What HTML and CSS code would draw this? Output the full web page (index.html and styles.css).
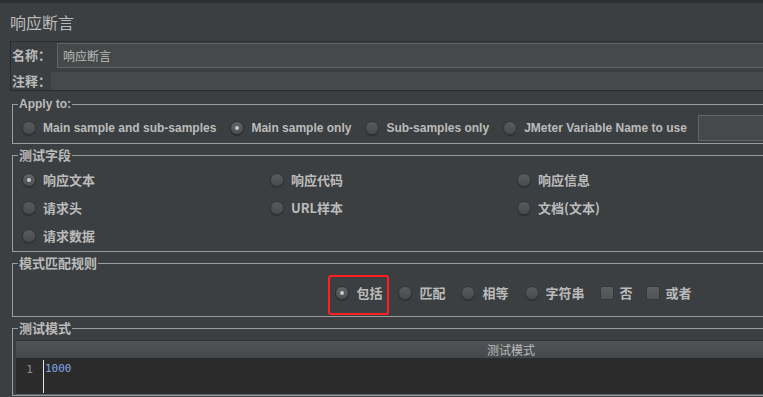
FILE: index.html
```html
<!DOCTYPE html>
<html>
    <head>
        <link rel="stylesheet" href="styles.css">
    </head>
    <body>
        <div class="topbar"></div>
        <div class="title">响应断言</div>
        <div class="name-panel">
            <div class="name-row">
                <span class="label">名称：</span>
                <div class="field name-field">响应断言</div>
            </div>
            <div class="name-row">
                <span class="label">注释：</span>
                <div class="field comment-field"></div>
            </div>
        </div>
        <div class="main">
            <fieldset class="group apply">
                <legend class="latin">Apply to:</legend>
                <div class="apply-row">
                    <span class="option latin"><span class="radio"></span>Main sample and sub-samples</span>
                    <span class="option latin"><span class="radio checked"></span>Main sample only</span>
                    <span class="option latin"><span class="radio"></span>Sub-samples only</span>
                    <span class="option latin"><span class="radio"></span>JMeter Variable Name to use</span>
                    <span class="var-field"></span>
                </div>
            </fieldset>
            <fieldset class="group fields">
                <legend>测试字段</legend>
                <div class="field-grid">
                    <span class="option"><span class="radio checked"></span>响应文本</span>
                    <span class="option"><span class="radio"></span>响应代码</span>
                    <span class="option"><span class="radio"></span>响应信息</span>
                    <span class="option"><span class="radio"></span>请求头</span>
                    <span class="option"><span class="radio"></span>URL样本</span>
                    <span class="option"><span class="radio"></span>文档(文本)</span>
                    <span class="option"><span class="radio"></span>请求数据</span>
                </div>
            </fieldset>
            <fieldset class="group rules">
                <legend>模式匹配规则</legend>
                <div class="rule-row">
                    <span class="option marked"><span class="radio checked"></span>包括</span>
                    <span class="option"><span class="radio"></span>匹配</span>
                    <span class="option"><span class="radio"></span>相等</span>
                    <span class="option"><span class="radio"></span>字符串</span>
                    <span class="option"><span class="checkbox"></span>否</span>
                    <span class="option"><span class="checkbox"></span>或者</span>
                </div>
            </fieldset>
            <fieldset class="group patterns">
                <legend>测试模式</legend>
                <div class="editor">
                    <div class="editor-head">测试模式</div>
                    <div class="editor-body">
                        <div class="gutter">1</div>
                        <div class="code">1000</div>
                    </div>
                </div>
            </fieldset>
        </div>
    </body>
</html>
```

FILE: styles.css
```css
body {
    margin: 0;
    width: 763px;
    height: 397px;
    overflow: hidden;
    background-color: #3c3f41;
    color: #bbbbbb;
    font-family: "Noto Sans CJK SC", "Liberation Sans", sans-serif;
}

.topbar {
    height: 3px;
    background-color: #2d2f30;
}

.title {
    height: 38px;
    line-height: 38px;
    padding-left: 10px;
    font-size: 16px;
}

.name-panel {
    margin-left: 10px;
    width: 1000px;
    border: 1px solid #2b2b2b;
    border-right: none;
}

.name-row {
    display: flex;
    align-items: center;
}

.name-row + .name-row {
    margin-top: 4px;
}

.label {
    width: 39px;
    padding-left: 1px;
    font-size: 13px;
    font-weight: bold;
    line-height: 16px;
}

.field {
    flex: 1;
    background-color: #45494a;
    font-size: 12px;
}

.name-field {
    margin-top: 1px;
    margin-left: 6px;
    height: 23px;
    line-height: 23px;
    padding-left: 5px;
    border: 1px solid #646464;
}

.comment-field {
    height: 18px;
}

.main {
    margin-left: 12px;
    margin-top: 6px;
    width: 998px;
}

.group {
    margin: 0 0 4px 0;
    padding: 0;
    min-width: 0;
    border: 1px solid #9d9d9d;
}

.group legend {
    margin-left: 5px;
    padding: 0 1px;
    font-size: 13px;
    font-weight: bold;
    line-height: 14px;
}

.option {
    display: inline-flex;
    align-items: center;
    font-size: 13px;
    font-weight: bold;
    line-height: 16px;
    white-space: nowrap;
}

.group legend.latin,
.option.latin {
    font-family: "Liberation Sans", sans-serif;
    font-size: 12px;
}

.radio {
    width: 14px;
    height: 14px;
    box-sizing: border-box;
    border-radius: 50%;
    margin-right: 7px;
    background: linear-gradient(#585c5e, #484b4d);
    border: 1px solid #333537;
    box-shadow: 0 1px 0 #2a2c2d;
    display: flex;
    align-items: center;
    justify-content: center;
}

.radio.checked {
    background: linear-gradient(#606466, #4d5052);
    border-color: #2d2f30;
}

.radio.checked::after {
    content: "";
    width: 4px;
    height: 4px;
    border-radius: 50%;
    background-color: #c8c8c8;
}

.checkbox {
    width: 14px;
    height: 14px;
    box-sizing: border-box;
    margin-right: 6px;
    border-radius: 2px;
    background: linear-gradient(#5c5f61, #505355);
    border: 1px solid #353739;
}

.apply-row {
    display: flex;
    align-items: center;
    gap: 14px;
    height: 30px;
    padding: 2px 0 0 9px;
}

.var-field {
    width: 120px;
    height: 26px;
    box-sizing: border-box;
    margin-left: -3px;
    background-color: #45494a;
    border: 1px solid #646464;
}

.field-grid {
    display: grid;
    grid-template-columns: 248px 247px 1fr;
    grid-auto-rows: 28px;
    align-items: center;
    padding: 4px 0 1px 9px;
}

.rule-row {
    display: flex;
    justify-content: center;
    align-items: center;
    gap: 16px;
    height: 42px;
    padding: 2px 0 2px 5px;
}

.rule-row .option:nth-child(5) {
    margin-left: -1px;
}

.rule-row .option:nth-child(6) {
    margin-left: -3px;
}

.marked {
    position: relative;
}

.marked::after {
    content: "";
    position: absolute;
    left: -7px;
    right: -7px;
    top: -10px;
    bottom: -14px;
    border: 2px solid #ff1f1f;
    border-radius: 3px;
}

.editor {
    margin: 5px 0 0 3px;
    width: 990px;
}

.editor-head {
    height: 17px;
    line-height: 17px;
    text-align: center;
    font-size: 12px;
    border-top: 1px solid #2e3032;
    background: linear-gradient(#505456, #45484a);
}

.editor-body {
    display: flex;
    height: 36px;
    background-color: #2b2b2b;
    border-bottom: 1px solid #5f6365;
}

.gutter {
    width: 27px;
    padding: 2px 0 0 0;
    text-align: center;
    border-right: 1px solid #e6e6e6;
    color: #8a8f8a;
    font-family: "DejaVu Sans Mono", monospace;
    font-size: 11px;
    line-height: 15px;
    margin: 2px 0 1px 0;
}

.code {
    padding: 3px 0 0 1px;
    color: #7fa8e6;
    font-family: "DejaVu Sans Mono", monospace;
    font-size: 11px;
    line-height: 15px;
}
```
